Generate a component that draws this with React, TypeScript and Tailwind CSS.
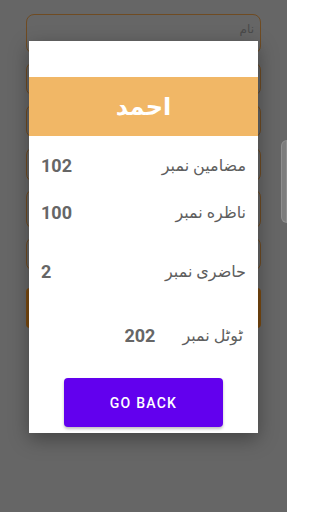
import React from "react";

const rows = [
  { label: "مضامين نمبر", value: "102", mt: "mt-[15px]" },
  { label: "ناظره نمبر", value: "100", mt: "mt-[17px]" },
  { label: "حاضری نمبر", value: "2", mt: "mt-[29px]" },
];

export default function App() {
  return (
    <div className="relative w-[287px] h-[512px] overflow-hidden bg-[#666666] font-['Roboto','Noto_Sans','DejaVu_Sans',sans-serif]">
      {/* background form (dimmed) */}
      <div className="flex flex-col px-[26px] pt-[14px]">
        <div className="h-[40px] rounded-lg border border-[#6f4b22] flex justify-end items-start pr-[6px] pt-[8px]">
          <span className="text-[12px] leading-none text-[#4a4a4a]">نام</span>
        </div>
        <div className="mt-[8px] h-[34px] rounded-lg border border-[#6f4b22]" />
        <div className="mt-[8px] h-[34px] rounded-lg border border-[#6f4b22]" />
        <div className="mt-[9px] h-[35px] rounded-lg border border-[#6f4b22]" />
        <div className="mt-[7px] h-[40px] rounded-lg border border-[#6f4b22]" />
        <div className="mt-[8px] h-[34px] rounded-lg border border-[#6f4b22]" />
        <div className="mt-[17px] h-[40px] rounded-sm bg-[#7a4a10]" />
      </div>

      {/* scroll handle on right */}
      <div className="absolute right-0 top-[140px] w-[6px] h-[83px] rounded-l-md bg-[#7d7d7d] border border-[#8e8e8e]" />

      {/* dialog */}
      <div className="absolute left-[29px] top-[41px] w-[229px] h-[392px] bg-white shadow-[0_6px_18px_rgba(0,0,0,0.35)] flex flex-col">
        <div className="h-[36px]" />
        <div className="h-[59px] bg-[#f1b766] flex items-center justify-center">
          <span className="text-[24px] font-bold text-white leading-none">احمد</span>
        </div>
        {rows.map((r) => (
          <div
            key={r.label}
            className={`${r.mt} h-[30px] flex items-center justify-between pl-[12px] pr-[12px]`}
          >
            <span className="text-[18px] font-bold text-[#666666] leading-none">{r.value}</span>
            <span className="text-[16px] text-[#5e5e5e] leading-none">{r.label}</span>
          </div>
        ))}
        <div className="mt-[34px] h-[30px] flex items-center justify-end gap-[27px] pr-[15px]">
          <span className="text-[18px] font-bold text-[#666666] leading-none">202</span>
          <span className="text-[16px] text-[#5e5e5e] leading-none">ٹوٹل نمبر</span>
        </div>
        <div className="mt-[27px] ml-[35px] w-[159px] h-[49px] rounded bg-[#6200ee] shadow-[0_2px_3px_rgba(0,0,0,0.25)] flex items-center justify-center">
          <span className="text-[14px] font-medium tracking-[1.25px] text-white leading-none">GO BACK</span>
        </div>
      </div>
    </div>
  );
}
